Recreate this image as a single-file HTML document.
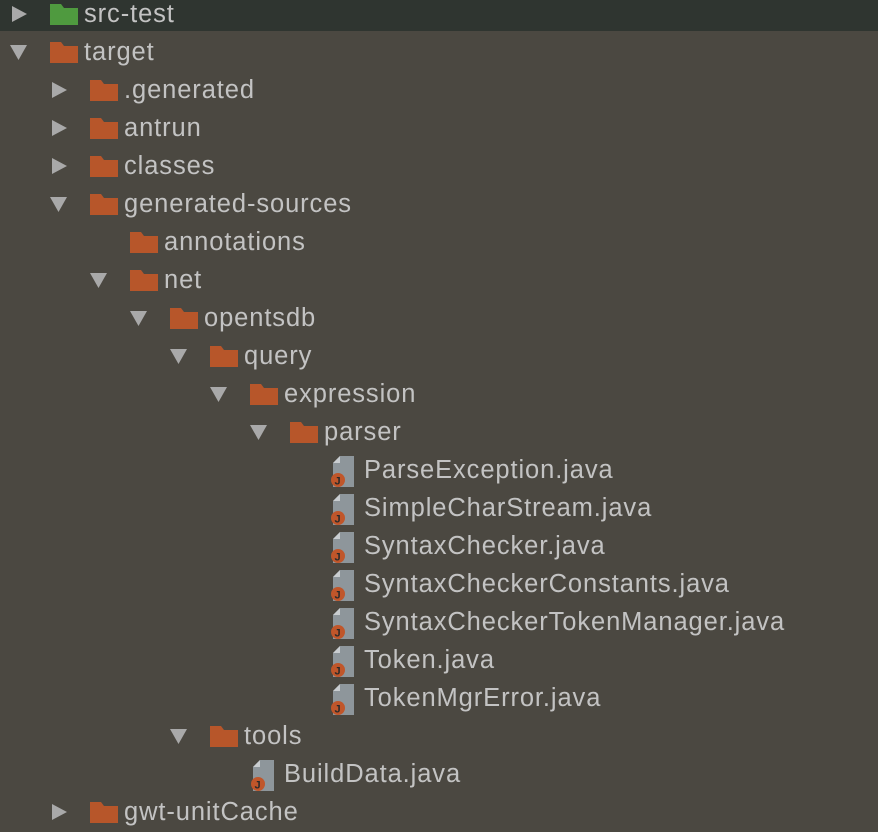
<!DOCTYPE html>
<html><head><style>
body{margin:0;width:878px;height:826px;background:#4b4841;overflow:hidden;font-family:"Liberation Sans",sans-serif;}
.top{position:absolute;left:0;top:0;width:878px;height:31px;background:#2f3530;}
.r{position:absolute;height:38px;line-height:40px;font-size:25.5px;letter-spacing:0.9px;color:#c3c3c3;white-space:nowrap;}
.r svg{position:absolute;}
</style></head><body>
<div class="top"></div>
<div id="t"></div>
<script>
const rows=[
[0,'r','g','src-test'],[0,'d','f','target'],[1,'r','f','.generated'],[1,'r','f','antrun'],[1,'r','f','classes'],
[1,'d','f','generated-sources'],[2,'','f','annotations'],[2,'d','f','net'],[3,'d','f','opentsdb'],[4,'d','f','query'],
[5,'d','f','expression'],[6,'d','f','parser'],[7,'','j','ParseException.java'],[7,'','j','SimpleCharStream.java'],
[7,'','j','SyntaxChecker.java'],[7,'','j','SyntaxCheckerConstants.java'],[7,'','j','SyntaxCheckerTokenManager.java'],
[7,'','j','Token.java'],[7,'','j','TokenMgrError.java'],[4,'d','f','tools'],[5,'','j','BuildData.java'],[1,'r','f','gwt-unitCache']];
let h='';
rows.forEach((r,i)=>{
 const y=i*38-6, x=r[0]*40;
 let s='<div class="r" style="left:0;top:'+y+'px;width:878px">';
 if(r[1]=='r')s+='<svg style="left:'+(x+12)+'px;top:12px" width="16" height="16"><path d="M0 0L15 8L0 16Z" fill="#a9a9a9"/></svg>';
 if(r[1]=='d')s+='<svg style="left:'+(x+10)+'px;top:13px" width="18" height="16"><path d="M0 0L17 0L8.5 15Z" fill="#a9a9a9"/></svg>';
 if(r[2]=='j'){
  s+='<svg style="left:'+(x+50)+'px;top:4px" width="26" height="34"><path d="M3 9L10 2L24 2L24 33L3 33Z" fill="#8e969b"/><path d="M3 9L10 2L10 9Z" fill="#c9cdd0"/><circle cx="8" cy="26" r="7" fill="#c0562a"/><text x="8" y="30.5" font-size="11" font-weight="bold" fill="#2a2a2a" text-anchor="middle" font-family="Liberation Sans">J</text></svg>';
 }else{
  const c=r[2]=='g'?'#4f9a3f':'#b7562a';
  s+='<svg style="left:'+(x+50)+'px;top:10px" width="28" height="22"><path d="M0 0L11 0L14 4L28 4L28 21L0 21Z" fill="'+c+'"/></svg>';
 }
 s+='<span style="position:absolute;left:'+(x+84)+'px">'+r[3]+'</span>';
 h+=s+'</div>';
});
document.getElementById('t').innerHTML=h;
</script>
</body></html>
